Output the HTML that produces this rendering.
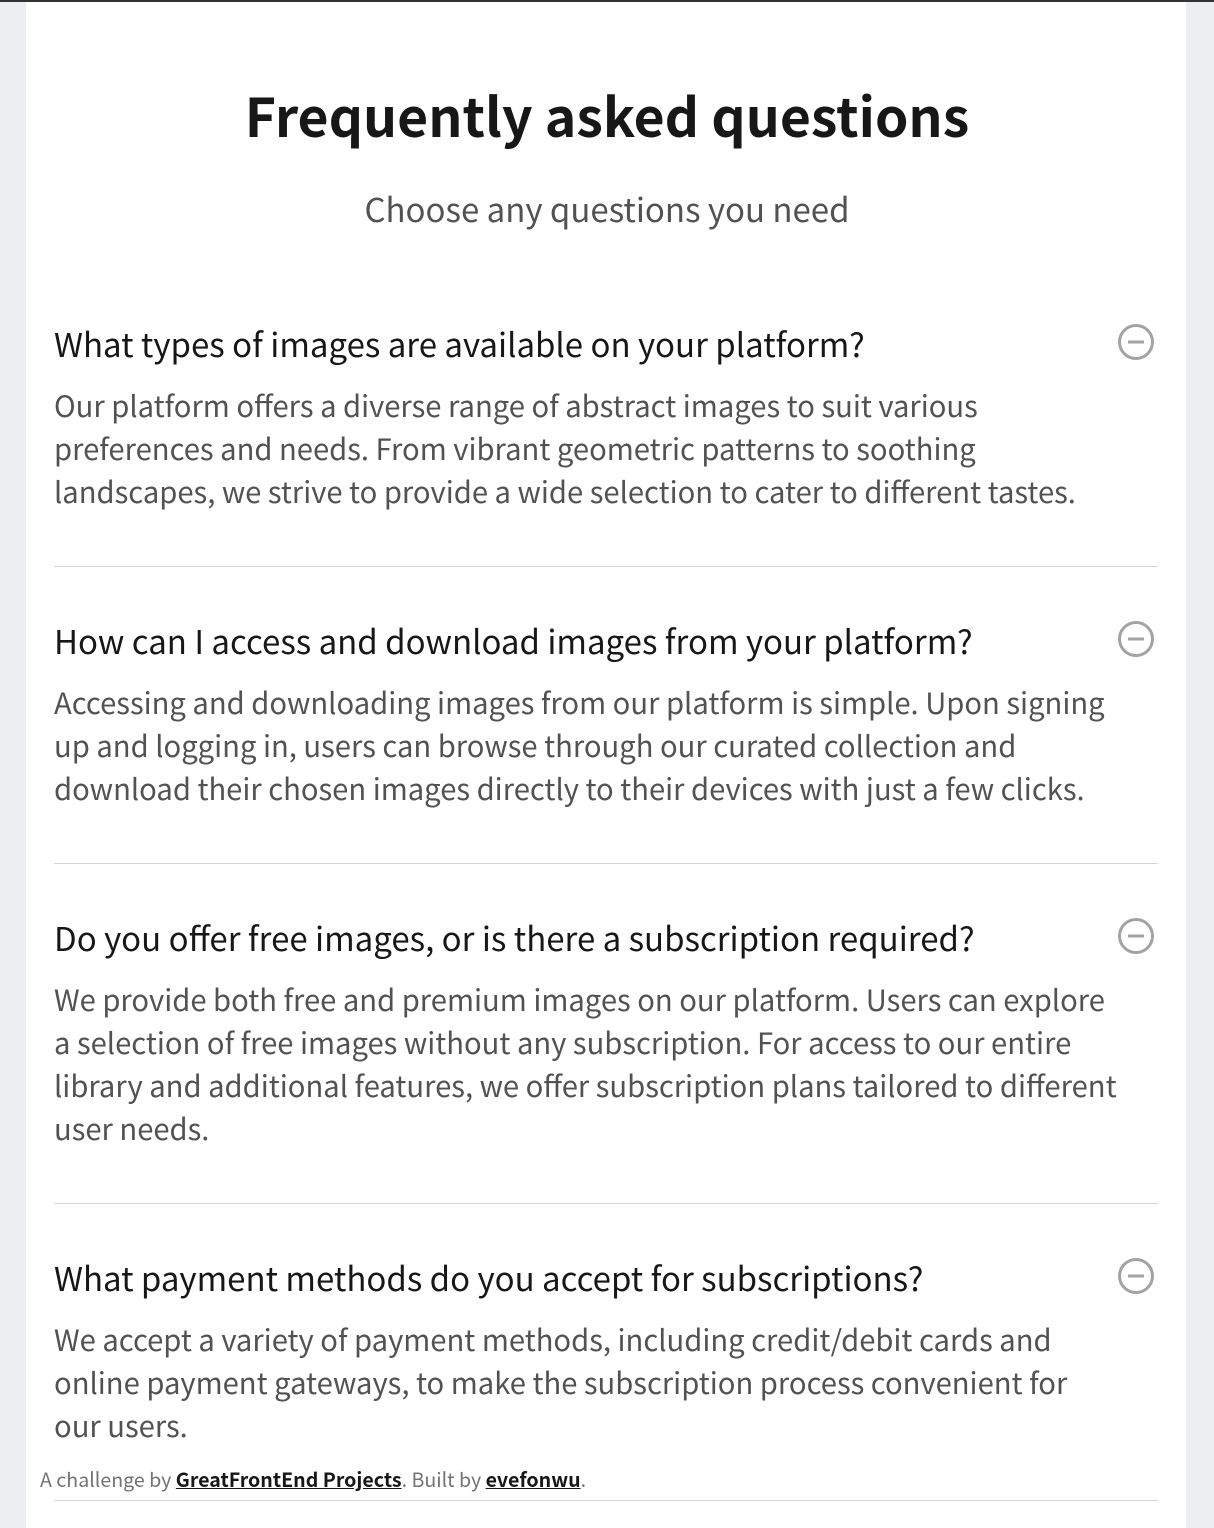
<!DOCTYPE html>
<html><head><meta charset="utf-8"><style>
html,body{margin:0;padding:0}
body{width:1214px;height:1526px;overflow:hidden;background:#eceef1;font-family:"Noto Sans CJK SC","Liberation Sans",sans-serif;position:relative;border-top:2px solid #333;box-sizing:border-box}
.card{position:absolute;left:26px;top:0;width:1160px;height:1526px;background:#fff}
.abs{position:absolute;margin:0}
h1{left:0;width:1214px;text-align:center;top:78px;font-size:53.5px;font-weight:700;color:#171717;line-height:70px}
.sub{left:0;width:1214px;text-align:center;top:184px;font-size:33px;color:#525252;line-height:44px}
.q{left:54px;font-size:33px;color:#171717;line-height:44px;white-space:nowrap}
.a{left:54px;font-size:29.2px;color:#525252;line-height:43px;white-space:nowrap}
.hr{left:54px;width:1104px;height:1px;background:#d4d4d4}
.ic{left:1117px;width:38px;height:38px}
.foot{left:40px;top:1464px;font-size:19.6px;color:#737373;line-height:26px;white-space:nowrap}
.foot a{color:#171717;font-weight:700;text-decoration:underline}
</style></head><body>
<div class="card"></div>
<h1 class="abs">Frequently asked questions</h1>
<p class="abs sub">Choose any questions you need</p>

<p class="abs q" style="top:319px">What types of images are available on your platform?</p>
<svg class="abs ic" style="top:321px" viewBox="0 0 38 38"><circle cx="19" cy="19" r="16.5" fill="none" stroke="#a3a3a3" stroke-width="3"/><line x1="11" y1="19" x2="27" y2="19" stroke="#a3a3a3" stroke-width="3"/></svg>
<p class="abs a" style="top:382px">Our platform offers a diverse range of abstract images to suit various<br>preferences and needs. From vibrant geometric patterns to soothing<br>landscapes, we strive to provide a wide selection to cater to different tastes.</p>
<div class="abs hr" style="top:564px"></div>

<p class="abs q" style="top:616px">How can I access and download images from your platform?</p>
<svg class="abs ic" style="top:618px" viewBox="0 0 38 38"><circle cx="19" cy="19" r="16.5" fill="none" stroke="#a3a3a3" stroke-width="3"/><line x1="11" y1="19" x2="27" y2="19" stroke="#a3a3a3" stroke-width="3"/></svg>
<p class="abs a" style="top:679px">Accessing and downloading images from our platform is simple. Upon signing<br>up and logging in, users can browse through our curated collection and<br>download their chosen images directly to their devices with just a few clicks.</p>
<div class="abs hr" style="top:861px"></div>

<p class="abs q" style="top:913px">Do you offer free images, or is there a subscription required?</p>
<svg class="abs ic" style="top:915px" viewBox="0 0 38 38"><circle cx="19" cy="19" r="16.5" fill="none" stroke="#a3a3a3" stroke-width="3"/><line x1="11" y1="19" x2="27" y2="19" stroke="#a3a3a3" stroke-width="3"/></svg>
<p class="abs a" style="top:976px">We provide both free and premium images on our platform. Users can explore<br>a selection of free images without any subscription. For access to our entire<br>library and additional features, we offer subscription plans tailored to different<br>user needs.</p>
<div class="abs hr" style="top:1201px"></div>

<p class="abs q" style="top:1253px">What payment methods do you accept for subscriptions?</p>
<svg class="abs ic" style="top:1255px" viewBox="0 0 38 38"><circle cx="19" cy="19" r="16.5" fill="none" stroke="#a3a3a3" stroke-width="3"/><line x1="11" y1="19" x2="27" y2="19" stroke="#a3a3a3" stroke-width="3"/></svg>
<p class="abs a" style="top:1316px">We accept a variety of payment methods, including credit/debit cards and<br>online payment gateways, to make the subscription process convenient for<br>our users.</p>
<div class="abs hr" style="top:1498px"></div>

<p class="abs foot">A challenge by <a>GreatFrontEnd Projects</a>. Built by <a>evefonwu</a>.</p>
</body></html>
